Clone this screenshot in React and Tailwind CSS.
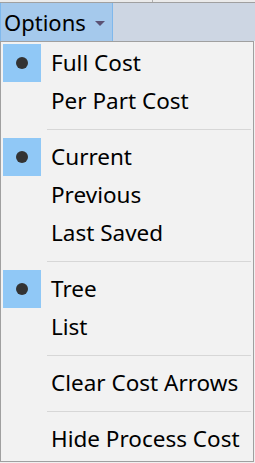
import React from 'react';

const groups = [
  [{ label: 'Full Cost', checked: true }, { label: 'Per Part Cost' }],
  [{ label: 'Current', checked: true }, { label: 'Previous' }, { label: 'Last Saved' }],
  [{ label: 'Tree', checked: true }, { label: 'List' }],
  [{ label: 'Clear Cost Arrows' }],
  [{ label: 'Hide Process Cost' }],
];

function MenuItem({ label, checked }) {
  return (
    <div className="flex h-[38px] items-center">
      <div
        className={
          'ml-[2px] flex h-[38px] w-[38px] items-center justify-center ' +
          (checked ? 'bg-[#90c8f6]' : '')
        }
      >
        {checked && <div className="h-[12px] w-[12px] rounded-full bg-[#333333]" />}
      </div>
      <span className="ml-[10px] text-[22.5px] leading-none text-black">{label}</span>
    </div>
  );
}

function Separator() {
  return (
    <div className="flex h-[18px] items-center">
      <div className="ml-[46px] mr-[2px] h-px flex-1 bg-[#d7d7d7]" />
    </div>
  );
}

export default function App() {
  return (
    <div
      className="h-[463px] w-[255px] overflow-hidden bg-[#f0f0f0]"
      style={{ fontFamily: '"Noto Sans", "Open Sans", sans-serif' }}
    >
      <div className="flex h-[3px] border-b border-[#a0a0a0] bg-[#ebebeb]">
        <div className="w-[153px] border-r border-[#b0b0b0]" />
      </div>
      <div className="flex h-[38px] bg-[#cdd6e3]">
        <div className="flex w-[113px] items-center border-r border-l border-r-[#7fb8ec] border-l-[#7fb8ec] bg-[#a5c9ec] pl-[3px]">
          <span className="text-[22px] leading-none text-black">Options</span>
          <svg className="ml-[9px] mt-[2px]" width="10" height="5" viewBox="0 0 10 5">
            <path d="M0 0 L10 0 L5 5 Z" fill="#5b5274" />
          </svg>
        </div>
      </div>
      <div className="w-[254px] border border-[#a0a0a0] bg-[#f2f2f2] pb-[3px] pt-[2px]">
        {groups.map((g, gi) => (
          <React.Fragment key={gi}>
            {gi > 0 && <Separator />}
            {g.map((it) => (
              <MenuItem key={it.label} {...it} />
            ))}
          </React.Fragment>
        ))}
      </div>
    </div>
  );
}
